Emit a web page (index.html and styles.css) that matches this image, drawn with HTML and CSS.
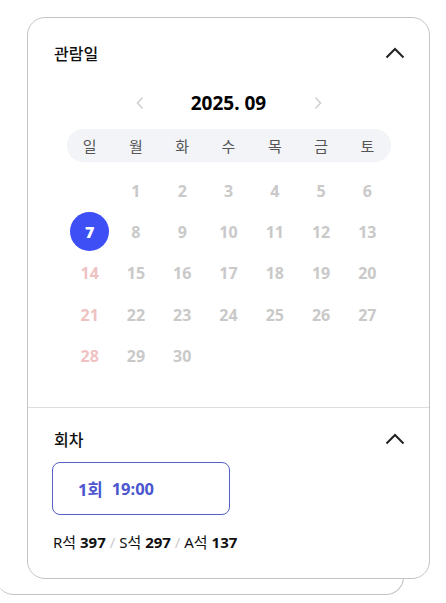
FILE: index.html
```html
<!DOCTYPE html>
<html lang="ko">
<head>
    <meta charset="UTF-8">
    <meta name="viewport" content="width=device-width, initial-scale=1.0">
    <title>관람일 선택</title>
    <link rel="stylesheet" href="styles.css">
</head>
<body>
    <div class="pilha">
        <section class="painel">
            <div class="bloco bloco-data">
                <div class="cabecalho">
                    <h2>관람일</h2>
                    <svg class="seta" width="20" height="12" viewBox="0 0 20 12"><path d="M1.5 10.5 L10 2 L18.5 10.5" fill="none" stroke="#222" stroke-width="2"/></svg>
                </div>
                <div class="mes">
                    <button class="nav-mes" aria-label="이전 달"><svg width="8" height="14" viewBox="0 0 8 14"><path d="M6.5 1.5 L1.5 7 L6.5 12.5" fill="none" stroke="#d0d0d0" stroke-width="1.6"/></svg></button>
                    <span class="mes-titulo">2025. 09</span>
                    <button class="nav-mes" aria-label="다음 달"><svg width="8" height="14" viewBox="0 0 8 14"><path d="M1.5 1.5 L6.5 7 L1.5 12.5" fill="none" stroke="#d0d0d0" stroke-width="1.6"/></svg></button>
                </div>
                <div class="semana">
                    <span>일</span><span>월</span><span>화</span><span>수</span><span>목</span><span>금</span><span>토</span>
                </div>
                <div class="dias">
                    <span></span><span>1</span><span>2</span><span>3</span><span>4</span><span>5</span><span>6</span>
                    <span class="hoje"><b>7</b></span><span>8</span><span>9</span><span>10</span><span>11</span><span>12</span><span>13</span>
                    <span class="domingo">14</span><span>15</span><span>16</span><span>17</span><span>18</span><span>19</span><span>20</span>
                    <span class="domingo">21</span><span>22</span><span>23</span><span>24</span><span>25</span><span>26</span><span>27</span>
                    <span class="domingo">28</span><span>29</span><span>30</span>
                </div>
            </div>
            <div class="bloco bloco-sessao">
                <div class="cabecalho">
                    <h2>회차</h2>
                    <svg class="seta" width="20" height="12" viewBox="0 0 20 12"><path d="M1.5 10.5 L10 2 L18.5 10.5" fill="none" stroke="#222" stroke-width="2"/></svg>
                </div>
                <button class="sessao"><span>1회</span><span>19:00</span></button>
                <p class="assentos">R석 <b>397</b> <i>/</i> S석 <b>297</b> <i>/</i> A석 <b>137</b></p>
            </div>
        </section>
    </div>
</body>
</html>
```

FILE: styles.css
```css
body {
    margin: 0;
    background-color: #ffffff;
    font-family: "Noto Sans", "Noto Sans CJK KR", sans-serif;
    color: #111111;
    overflow: hidden;
}
.pilha {
    position: relative;
    padding: 17px 16px 16px 27px;
}
/* cartão de trás, só a borda de baixo aparece */
.pilha::before {
    content: "";
    position: absolute;
    left: -4px;
    top: 17px;
    width: 407px;
    bottom: 0;
    border-right: 1px solid #c4c4c4;
    border-bottom: 1px solid #c4c4c4;
    border-radius: 18px;
    background-color: #ffffff;
}
.painel {
    position: relative;
    background-color: #ffffff;
    border: 1px solid #c4c4c4;
    border-radius: 18px;
}
.bloco {
    padding: 0 24px;
}
.bloco-data {
    padding-top: 23px;
    padding-bottom: 31px;
}
.bloco-sessao {
    border-top: 1px solid #dddddd;
    padding-top: 19px;
    padding-bottom: 26px;
}
.cabecalho {
    display: flex;
    justify-content: space-between;
    align-items: center;
    height: 24px;
    padding-left: 2px;
}
.cabecalho h2 {
    margin: 0;
    font-size: 16px;
    font-weight: 500;
    font-family: "Noto Sans CJK KR", sans-serif;
    color: #111111;
}
.seta {
    display: block;
}
.mes {
    display: flex;
    justify-content: center;
    align-items: center;
    height: 28px;
    margin-top: 24px;
}
.mes-titulo {
    font-size: 19px;
    font-weight: 700;
    width: 150px;
    text-align: center;
    color: #000000;
}
.nav-mes {
    background: none;
    border: none;
    padding: 0 10px;
    display: flex;
    align-items: center;
}
.semana {
    display: grid;
    grid-template-columns: repeat(7, 1fr);
    width: 324px;
    height: 33px;
    margin: 12px auto 0;
    background-color: #f3f4f7;
    border-radius: 16px;
    align-items: center;
    text-align: center;
    font-family: "Noto Sans CJK KR", sans-serif;
    font-size: 15px;
    color: #555555;
}
.dias {
    display: grid;
    grid-template-columns: repeat(7, 1fr);
    grid-auto-rows: 41.3px;
    width: 324px;
    margin: 8px auto 0;
    align-items: center;
    justify-items: center;
    font-size: 16px;
    font-weight: 700;
    color: #c9c9c9;
}
.domingo {
    color: #efc2c2;
}
.hoje b {
    display: flex;
    justify-content: center;
    align-items: center;
    width: 39px;
    height: 39px;
    border-radius: 50%;
    background-color: #3d4ff5;
    color: #ffffff;
}
.sessao {
    display: flex;
    gap: 9px;
    width: 178px;
    height: 53px;
    margin-top: 11px;
    padding: 0 0 0 25px;
    align-items: center;
    background-color: #ffffff;
    border: 1px solid #5760c4;
    border-radius: 8px;
    font-family: "Noto Sans", "Noto Sans CJK KR", sans-serif;
    font-size: 16.5px;
    font-weight: 700;
    color: #4b56cf;
}
.assentos {
    margin: 17px 0 0 1px;
    line-height: 20px;
    font-size: 15px;
    color: #111111;
}
.assentos b {
    font-weight: 700;
}
.assentos i {
    font-style: normal;
    color: #cccccc;
}
```
